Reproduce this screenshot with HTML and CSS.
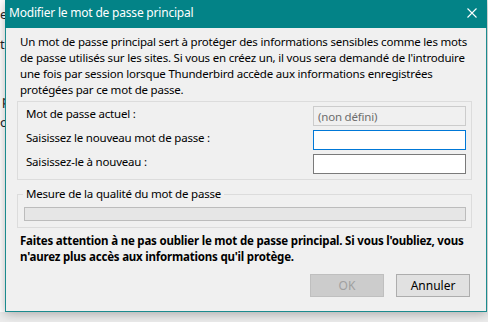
FILE: index.html
```html
<!DOCTYPE html>
<html lang="fr">
<head>
    <meta charset="UTF-8">
    <title>Modifier le mot de passe principal</title>
    <link rel="stylesheet" href="styles.css">
</head>
<body>
    <div class="behind">
        <span class="peek peek-1">e</span>
        <span class="peek peek-2">t</span>
        <span class="peek peek-3">p</span>
        <span class="peek peek-4">o</span>
    </div>

    <div class="dialog">
        <div class="title-bar">
            <span class="title">Modifier le mot de passe principal</span>
            <svg class="close" width="10" height="10" viewBox="0 0 10 10">
                <path d="M0.5 0.5 L9.5 9.5 M9.5 0.5 L0.5 9.5" stroke="#fff" stroke-width="1.1" fill="none"/>
            </svg>
        </div>

        <div class="content">
            <p class="intro">Un mot de passe principal sert à protéger des informations sensibles comme les mots<br>
                de passe utilisés sur les sites. Si vous en créez un, il vous sera demandé de l'introduire<br>
                une fois par session lorsque Thunderbird accède aux informations enregistrées<br>
                protégées par ce mot de passe.</p>

            <div class="group">
                <div class="row">
                    <label for="oldpw">Mot de passe actuel :</label>
                    <input type="text" id="oldpw" class="field disabled" value="(non défini)" disabled>
                </div>
                <div class="row">
                    <label for="pw1">Saisissez le nouveau mot de passe :</label>
                    <input type="password" id="pw1" class="field focused">
                </div>
                <div class="row">
                    <label for="pw2">Saisissez-le à nouveau :</label>
                    <input type="password" id="pw2" class="field">
                </div>
            </div>

            <fieldset class="quality">
                <legend>Mesure de la qualité du mot de passe</legend>
                <div class="meter"></div>
            </fieldset>

            <p class="warning">Faites attention à ne pas oublier le mot de passe principal. Si vous l'oubliez, vous<br>
                n'aurez plus accès aux informations qu'il protège.</p>

            <div class="buttons">
                <button class="btn" disabled>OK</button>
                <button class="btn">Annuler</button>
            </div>
        </div>
    </div>
</body>
</html>
```

FILE: styles.css
```css
body {
    margin: 0;
    width: 488px;
    height: 322px;
    overflow: hidden;
    position: relative;
    background-color: #ececec;
    font-family: "Noto Sans", sans-serif;
    font-size: 11.5px;
    letter-spacing: -0.2px;
    color: #000;
}

.behind {
    width: 12px;
    height: 312px;
    background-color: #fff;
    border-right: 1px solid #e3e3e3;
}

.peek {
    display: block;
    height: 16px;
    line-height: 16px;
    font-size: 13px;
    color: #222;
}

.peek-1 { padding-top: 6px; }
.peek-2 { padding-top: 14px; }
.peek-3 { padding-top: 40px; padding-left: 2px; }
.peek-4 { padding-top: 6px; }

/* the dialog window sits on top of the app behind it */
.dialog {
    position: absolute;
    top: 0;
    left: 5px;
    width: 480px;
    border: 1px solid #1b8b8e;
    border-top: none;
    background-color: #f0f0f0;
    box-shadow: 0 2px 10px rgba(0, 0, 0, 0.28);
}

.title-bar {
    height: 28px;
    box-sizing: border-box;
    padding: 5px 10px 0 4px;
    margin: 0 -1px;
    background-color: #038387;
    color: #fff;
    display: flex;
    justify-content: space-between;
    align-items: flex-start;
    line-height: 16px;
    font-size: 12px;
}

.close {
    margin-top: 3px;
}

.content {
    padding: 6px 14px 14px 11px;
}

.intro,
.warning {
    margin: 0;
    padding-left: 3px;
    line-height: 16px;
    white-space: nowrap;
}

.group {
    margin-top: 3px;
    border: 1px solid #dcdcdc;
    padding: 4px 5px 5px 8px;
    display: flex;
    flex-direction: column;
    gap: 4px;
}

.row {
    display: flex;
    justify-content: space-between;
    align-items: flex-start;
}

label {
    line-height: 16px;
}

.field {
    width: 153px;
    height: 20px;
    box-sizing: border-box;
    margin: 0;
    padding: 0 4px;
    border: 1px solid #7a7a7a;
    background-color: #fff;
    font-family: inherit;
    font-size: 11.5px;
    letter-spacing: -0.2px;
    outline: none;
}

.field.focused {
    border-color: #0078d7;
}

.field.disabled {
    border-color: #cccccc;
    background-color: #f0f0f0;
    color: #6d6d6d;
}

.quality {
    margin: 7px 0 0;
    padding: 0 5px 6px 6px;
    border: 1px solid #dcdcdc;
}

.quality legend {
    margin-left: -1px;
    padding: 0 3px;
    line-height: 14px;
}

.meter {
    margin-top: 6px;
    height: 14px;
    box-sizing: border-box;
    border: 1px solid #bcbcbc;
    background-color: #e6e6e6;
}

.warning {
    margin-top: 5px;
    font-weight: bold;
}

.buttons {
    margin-top: 9px;
    margin-right: 2px;
    display: flex;
    justify-content: flex-end;
    gap: 12px;
}

.btn {
    width: 74px;
    height: 23px;
    padding: 0;
    border: 1px solid #adadad;
    background-color: #e1e1e1;
    font-family: inherit;
    font-size: 12px;
    color: #000;
}

.btn:disabled {
    border-color: #bfbfbf;
    background-color: #cccccc;
    color: #a0a0a0;
}
```
